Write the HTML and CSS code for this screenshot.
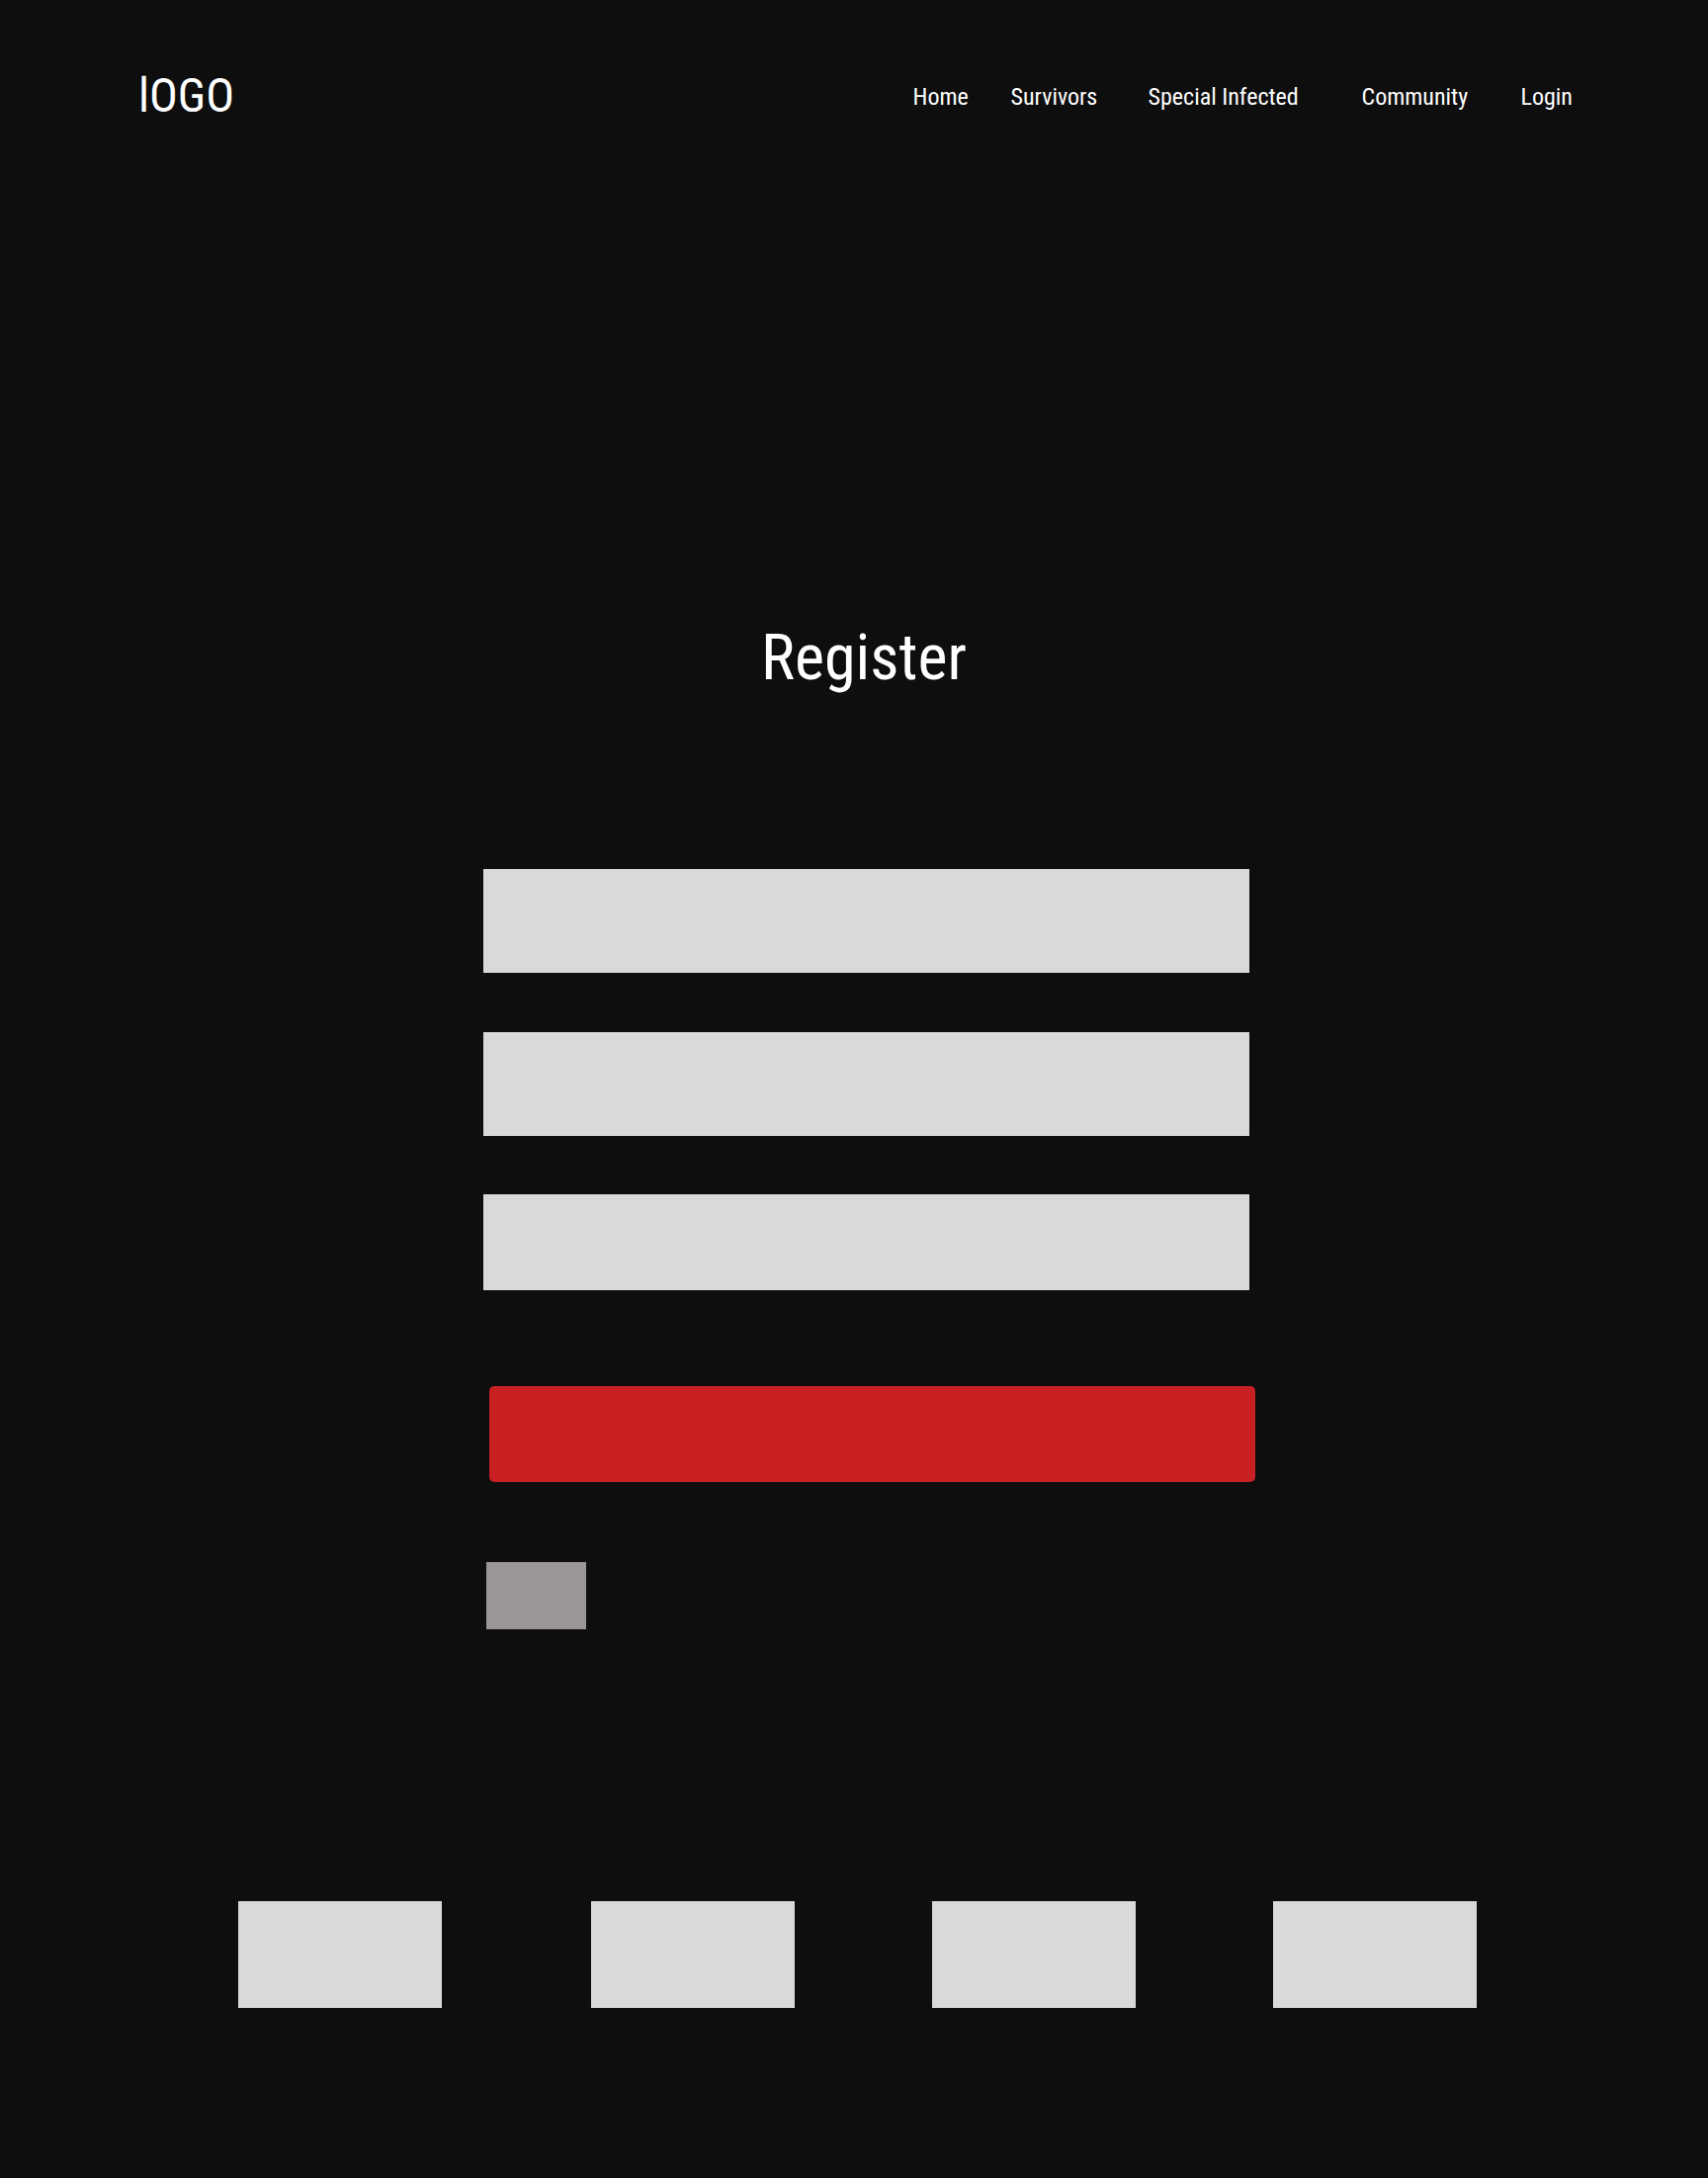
FILE: index.html
```html
<!DOCTYPE html>
<html lang="en">
<head>
<meta charset="utf-8">
<title>Register</title>
<link rel="stylesheet" href="styles.css">
</head>
<body>
<header class="top">
  <div class="logo">lOGO</div>
  <nav class="nav">
    <a class="nav-item w-home" href="#">Home</a>
    <a class="nav-item w-surv" href="#">Survivors</a>
    <a class="nav-item w-spec" href="#">Special Infected</a>
    <a class="nav-item w-comm" href="#">Community</a>
    <a class="nav-item" href="#">Login</a>
  </nav>
</header>
<main class="register">
  <h1 class="title">Register</h1>
  <form class="form">
    <div class="field field-tall"></div>
    <div class="field field-tall"></div>
    <div class="field field-short"></div>
    <div class="submit"></div>
    <div class="small-box"></div>
  </form>
</main>
<footer class="footer">
  <div class="f-box"></div>
  <div class="f-box"></div>
  <div class="f-box"></div>
  <div class="f-box"></div>
</footer>
</body>
</html>
```
FILE: styles.css
```css
* { box-sizing: border-box; }
html, body { margin: 0; padding: 0; }
body {
  background: #0e0e0e;
  color: #ffffff;
  font-family: "Roboto Condensed", "Liberation Sans Narrow", Roboto, sans-serif;
  width: 1728px;
  height: 2203px;
  overflow: hidden;
}
.top {
  display: flex;
  align-items: flex-start;
  justify-content: space-between;
  padding: 68px 0 0 140px;
  height: 180px;
}
.logo {
  font-size: 48px;
  line-height: 57px;
  font-weight: 400;
  color: #ffffff;
}
.nav {
  display: flex;
  padding-top: 16px;
  margin-right: 137px;
}
.nav-item {
  color: #ffffff;
  text-decoration: none;
  font-size: 24px;
  line-height: 28px;
  font-weight: 400;
}
.w-home { width: 99px; }
.w-surv { width: 139px; }
.w-spec { width: 216px; }
.w-comm { width: 161px; }

.register {
  display: flex;
  flex-direction: column;
  align-items: center;
}
.title {
  margin: 448px 0 0 20px;
  font-size: 64px;
  line-height: 75px;
  font-weight: 400;
  color: #ffffff;
}
.form {
  display: flex;
  flex-direction: column;
  width: 775px;
  margin: 176px 0 0 25px;
}
.field {
  background: #d9d9d9;
  width: 775px;
}
.field-tall { height: 105px; margin-bottom: 60px; }
.field-tall + .field-tall { margin-bottom: 59px; }
.field-short { height: 97px; }
.submit {
  margin: 97px 0 0 6px;
  width: 775px;
  height: 97px;
  background: #c82023;
  border-radius: 5px;
}
.small-box {
  margin: 81px 0 0 3px;
  width: 101px;
  height: 68px;
  background: #9a9695;
}
.footer {
  display: flex;
  padding: 275px 0 0 241px;
}
.f-box {
  width: 206px;
  height: 108px;
  background: #d9d9d9;
  margin-right: 139px;
}
.f-box:first-child { margin-right: 151px; }
```
